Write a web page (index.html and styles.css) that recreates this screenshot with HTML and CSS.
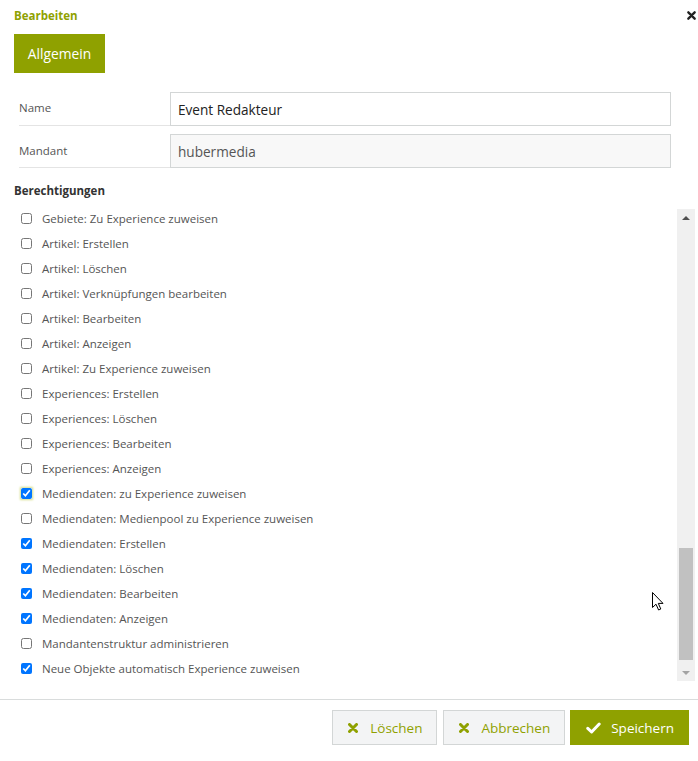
FILE: index.html
```html
<!DOCTYPE html>
<html lang="de">
<head>
<meta charset="utf-8">
<title>Bearbeiten</title>
<link rel="stylesheet" href="styles.css">
</head>
<body>
<div class="dialog">
  <div class="header">
    <span class="title">Bearbeiten</span>
    <span class="close"><svg width="9" height="9" viewBox="0 0 10 10"><path d="M1.5 1.5 L8.5 8.5 M8.5 1.5 L1.5 8.5" stroke="#222" stroke-width="2.6" stroke-linecap="round"/></svg></span>
  </div>
  <div class="tabs"><span class="tab">Allgemein</span></div>
  <div class="form">
    <div class="row">
      <div class="label">Name</div>
      <div class="field"><input class="input" type="text" value="Event Redakteur"></div>
    </div>
    <div class="row">
      <div class="label">Mandant</div>
      <div class="field"><input class="input readonly" type="text" value="hubermedia" readonly></div>
    </div>
  </div>
  <div class="section-title">Berechtigungen</div>
  <div class="perm-box">
    <ul class="perm-list">
      <li><input type="checkbox"><span>Gebiete: Zu Experience zuweisen</span></li>
      <li><input type="checkbox"><span>Artikel: Erstellen</span></li>
      <li><input type="checkbox"><span>Artikel: Löschen</span></li>
      <li><input type="checkbox"><span>Artikel: Verknüpfungen bearbeiten</span></li>
      <li><input type="checkbox"><span>Artikel: Bearbeiten</span></li>
      <li><input type="checkbox"><span>Artikel: Anzeigen</span></li>
      <li><input type="checkbox"><span>Artikel: Zu Experience zuweisen</span></li>
      <li><input type="checkbox"><span>Experiences: Erstellen</span></li>
      <li><input type="checkbox"><span>Experiences: Löschen</span></li>
      <li><input type="checkbox"><span>Experiences: Bearbeiten</span></li>
      <li><input type="checkbox"><span>Experiences: Anzeigen</span></li>
      <li><input type="checkbox" class="focused" checked><span>Mediendaten: zu Experience zuweisen</span></li>
      <li><input type="checkbox"><span>Mediendaten: Medienpool zu Experience zuweisen</span></li>
      <li><input type="checkbox" checked><span>Mediendaten: Erstellen</span></li>
      <li><input type="checkbox" checked><span>Mediendaten: Löschen</span></li>
      <li><input type="checkbox" checked><span>Mediendaten: Bearbeiten</span></li>
      <li><input type="checkbox" checked><span>Mediendaten: Anzeigen</span></li>
      <li><input type="checkbox"><span>Mandantenstruktur administrieren</span></li>
      <li><input type="checkbox" checked><span>Neue Objekte automatisch Experience zuweisen</span></li>
    </ul>
    <div class="scrollbar">
      <div class="arrow up"></div>
      <div class="track"><div class="thumb"></div></div>
      <div class="arrow down"></div>
    </div>
  </div>
  <div class="footer">
    <button class="btn first"><svg class="ico" width="10" height="10" viewBox="0 0 10 10"><path d="M1.5 1.5 L8.5 8.5 M8.5 1.5 L1.5 8.5" stroke="#8fa100" stroke-width="3" stroke-linecap="round"/></svg>Löschen</button>
    <button class="btn"><svg class="ico" width="10" height="10" viewBox="0 0 10 10"><path d="M1.5 1.5 L8.5 8.5 M8.5 1.5 L1.5 8.5" stroke="#8fa100" stroke-width="3" stroke-linecap="round"/></svg>Abbrechen</button>
    <button class="btn primary"><svg class="ico check" width="15" height="12" viewBox="0 0 15 12"><path d="M1.8 6.4 L5.6 10 L13.2 2" fill="none" stroke="#fff" stroke-width="3" stroke-linecap="round" stroke-linejoin="round"/></svg>Speichern</button>
  </div>
  <svg class="cursor" width="12" height="19" viewBox="0 0 12 19"><path d="M0.5 0.5 L0.5 15.5 L4 12.2 L6.6 18 L8.8 17 L6.3 11.4 L11 11.4 Z" fill="#fff" stroke="#000" stroke-width="1"/></svg>
</div>
</body>
</html>
```
FILE: styles.css
```css
* { box-sizing: border-box; }
html, body { margin: 0; padding: 0; background: #fff; }
body {
  font-family: "Open Sans", "Liberation Sans", sans-serif;
  color: #555;
  width: 698px;
  height: 761px;
  overflow: hidden;
}
.dialog { position: relative; width: 698px; height: 761px; }
.header {
  display: flex;
  justify-content: space-between;
  align-items: center;
  height: 30px;
  padding: 0 2px 0 14px;
}
.title { color: #8fa100; font-weight: 700; font-size: 11.5px; }
.close { display: flex; align-items: center; }
.tabs { padding: 4px 14px 0; height: 43px; }
.tab {
  display: inline-flex;
  align-items: center;
  justify-content: center;
  width: 91px;
  height: 39px;
  background: #8fa100;
  color: #fff;
  font-size: 13.8px;
}
.form { padding: 11px 27px 0 19px; }
.row { display: grid; grid-template-columns: 151px 1fr; }
.label {
  display: flex;
  align-items: center;
  padding-top: 8px;
  padding-bottom: 3px;
  font-size: 11.5px;
  color: #555;
  border-bottom: 1px solid #e4e4e4;
}
.row + .row .label { padding-bottom: 0; }
.field { padding-top: 8px; }
.input {
  display: block;
  width: 100%;
  height: 34px;
  border: 1px solid #d3d6d6;
  border-radius: 0;
  padding: 0 7px;
  font-family: "Open Sans", "Liberation Sans", sans-serif;
  font-size: 13.6px;
  color: #222;
  background: #fff;
  outline: none;
}
.input.readonly { background: #f8f8f8; color: #555; }
.section-title {
  margin-top: 15px;
  padding-left: 14px;
  font-size: 11.5px;
  font-weight: 700;
  color: #333;
  height: 23px;
}
.perm-box {
  display: flex;
  height: 475px;
  padding-right: 3px;
}
.perm-list {
  flex: 1;
  list-style: none;
  margin: 0;
  padding: 0 0 0 20px;
}
.perm-list li {
  display: flex;
  align-items: center;
  height: 25px;
  font-size: 11.5px;
  color: #555;
}
.perm-list input {
  width: 11px;
  height: 11px;
  margin: 0 10px 0 1px;
  accent-color: #0075ff;
}
.perm-list input.focused { box-shadow: 0 0 2px 1px #d6de8a; border-radius: 2px; }
.scrollbar {
  width: 18px;
  margin-top: 3px;
  background: #f0f0f0;
  display: flex;
  flex-direction: column;
}
.arrow { height: 17px; display: flex; align-items: center; justify-content: center; }
.arrow.up::before {
  content: "";
  border-left: 4px solid transparent;
  border-right: 4px solid transparent;
  border-bottom: 4px solid #505050;
}
.arrow.down::before {
  content: "";
  border-left: 4px solid transparent;
  border-right: 4px solid transparent;
  border-top: 4px solid #a3a3a3;
}
.track { flex: 1; display: flex; flex-direction: column; justify-content: flex-end; padding: 0 2px 4px; }
.thumb { height: 112px; background: #c1c1c1; }
.footer {
  margin-top: 18px;
  border-top: 1px solid #d9dcdc;
  display: flex;
  justify-content: flex-end;
  gap: 5px;
  padding: 10px 9px 0 0;
}
.btn {
  display: inline-flex;
  align-items: center;
  height: 35px;
  padding: 0 14px 0 15px;
  border: 1px solid #d3d6d6;
  background: #f3f4f5;
  color: #8fa100;
  font-family: "Open Sans", "Liberation Sans", sans-serif;
  font-size: 13.5px;
}
.btn.first { margin-right: 1px; }
.btn .ico { margin-right: 12px; }
.btn.primary { background: #8fa100; border-color: #8fa100; color: #fff; padding-right: 14px; }
.btn.primary .ico { margin-right: 10px; }
.cursor { position: absolute; left: 652px; top: 592px; }
```
